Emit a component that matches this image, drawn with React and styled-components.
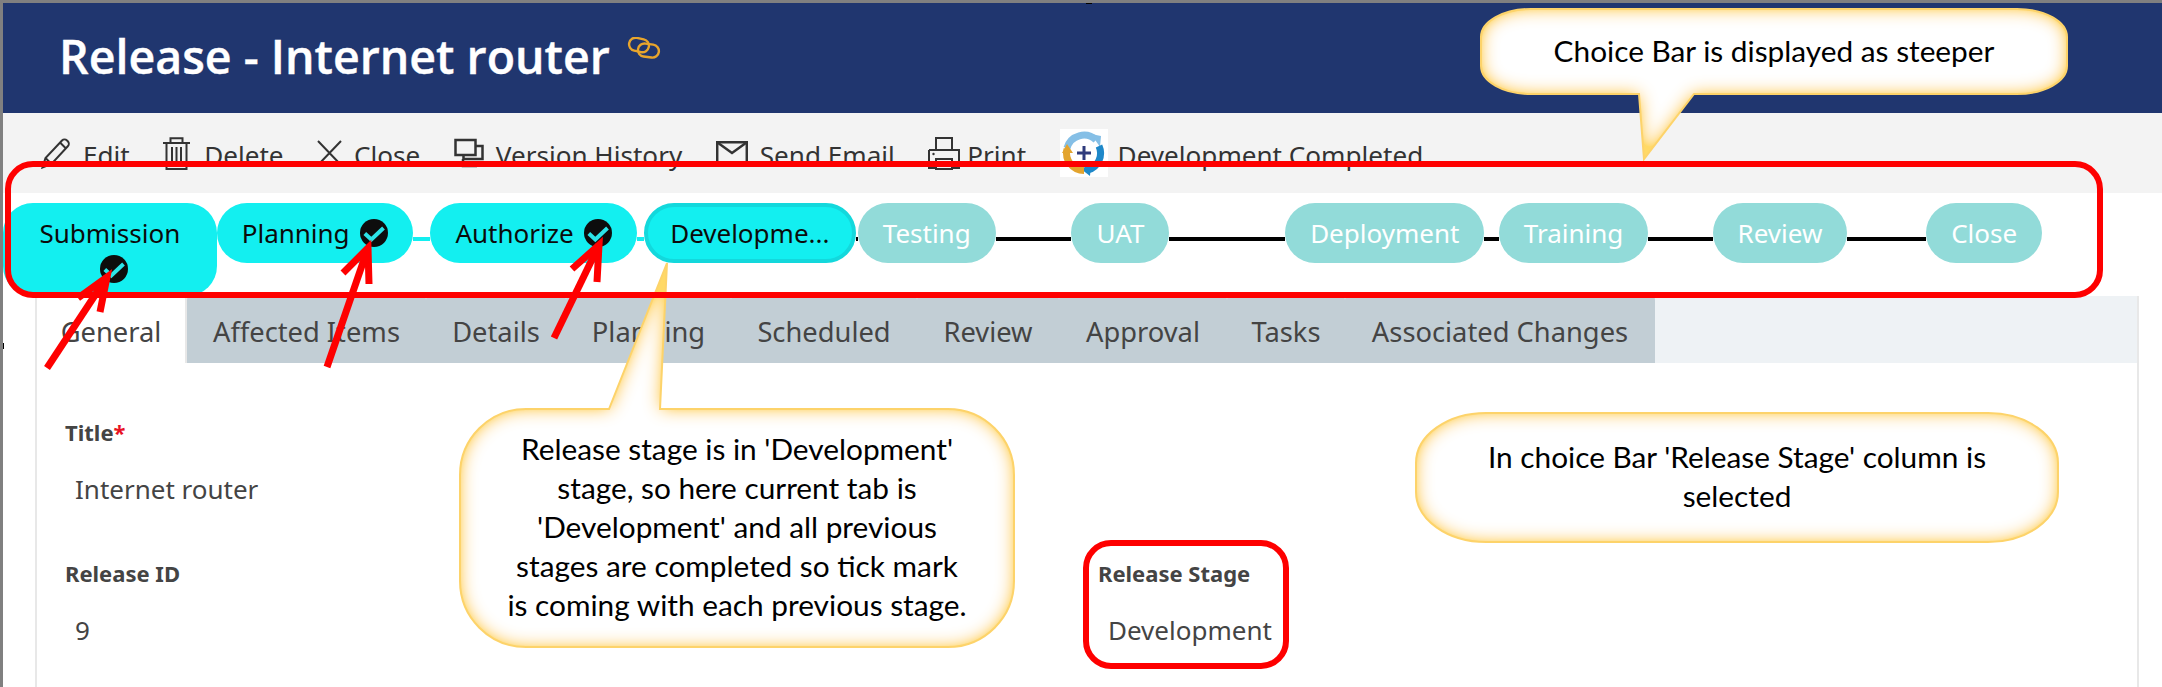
import React from "react";
import styled, { createGlobalStyle } from "styled-components";

const Global = createGlobalStyle`
  html, body { margin: 0; padding: 0; background: #fff; }
  #root { width: 2162px; height: 687px; overflow: hidden; }
`;

const UI = `"Noto Sans", "Open Sans", sans-serif`;

const Page = styled.div`
  position: relative;
  box-sizing: border-box;
  width: 2162px;
  height: 687px;
  overflow: hidden;
  border-top: 3px solid #808080;
  border-left: 3px solid #808080;
  background: #fff;
  font-family: ${UI};
`;

const Handle = styled.span`
  position: absolute;
  z-index: 5;
  box-sizing: border-box;
  width: ${(p) => p.$w}px;
  height: ${(p) => p.$h}px;
  left: ${(p) => p.$x}px;
  top: ${(p) => p.$y}px;
  background: #fff;
  border: 1px solid #000;
`;

const Header = styled.header`
  display: flex;
  align-items: flex-start;
  height: 110px;
  padding-left: 56px;
  background: #20366f;
`;

const Title = styled.h1`
  margin: 22px 0 0;
  color: #fff;
  font-family: "Open Sans", sans-serif;
  font-size: 46.5px;
  line-height: 62px;
  font-weight: 600;
  -webkit-text-stroke: 0.4px #fff;
`;

const LinkMark = styled.svg`
  width: 34px;
  height: 22px;
  margin: 34px 0 0 17px;
`;

const Toolbar = styled.nav`
  display: flex;
  align-items: center;
  gap: 33.5px;
  height: 80px;
  padding-left: 38px;
  background: #f3f3f3;
`;

const Action = styled.div`
  display: flex;
  align-items: center;
  gap: ${(p) => p.$gap || 12}px;
  color: #333;
  font-size: 26.1px;
  line-height: 34px;
`;

const ActionLabel = styled.span`
  position: relative;
  top: 2px;
`;

const Stepper = styled.div`
  display: grid;
  grid-template-columns: repeat(10, 213.7px);
  height: 103px;
  padding-top: 10px;
  box-sizing: border-box;
  background: #fff;
`;

const Step = styled.div`
  display: flex;
  align-items: flex-start;
  min-width: 0;
`;

const Pill = styled.div`
  box-sizing: border-box;
  display: flex;
  flex-direction: ${(p) => (p.$stacked ? "column" : "row")};
  flex: ${(p) => (p.$fill ? "1 1 auto" : "0 0 auto")};
  align-items: center;
  justify-content: ${(p) => (p.$stacked ? "flex-start" : "center")};
  gap: ${(p) => (p.$stacked ? "5px" : "10px")};
  height: ${(p) => (p.$stacked ? "93px" : "60px")};
  padding: ${(p) => (p.$stacked ? "13px 0 0" : p.$current ? "0 21px" : "0 25px")};
  border-radius: 30px;
  border: ${(p) => (p.$current ? "4px solid #13d8dc" : "0")};
  background: ${(p) => (p.$pending ? "#92dbd9" : "#13eff0")};
  color: ${(p) => (p.$pending ? "#fff" : "#0b0b0b")};
  font-size: 26px;
  line-height: 34px;
  white-space: nowrap;
`;

const Connector = styled.i`
  flex: 1 1 0;
  min-width: 0;
  height: 4px;
  margin-top: 34px;
  background: ${(p) => (p.$done ? "#13eff0" : "#000")};
`;

const Tick = styled.svg`
  flex: none;
  width: 28px;
  height: 28px;
  margin-left: ${(p) => (p.$shift ? "8px" : "0")};
`;

const Card = styled.section`
  box-sizing: border-box;
  width: 2104px;
  height: 400px;
  margin-left: 32px;
  border-left: 2px solid #e8e8e8;
  border-right: 2px solid #e8e8e8;
`;

const TabBar = styled.div`
  display: flex;
  height: 67px;
  background: #eef2f5;
`;

const Tab = styled.div`
  box-sizing: border-box;
  flex: none;
  display: flex;
  align-items: center;
  justify-content: center;
  width: ${(p) => p.$w}px;
  padding-top: 4px;
  border-radius: 4px 4px 0 0;
  background: ${(p) => (p.$active ? "#fff" : "#c2ced5")};
  border-right: ${(p) => (p.$active ? "2px solid #e8e8e8" : "0")};
  color: #444;
  font-size: 27.3px;
  line-height: 34px;
`;

const Form = styled.div`
  display: grid;
  grid-template-columns: 1033px 1fr;
  grid-template-rows: 141px 121px;
  padding: 54px 0 0 28px;
`;

const Field = styled.div`
  position: relative;
  grid-column: ${(p) => p.$col || 1};
  grid-row: ${(p) => p.$row};
  width: fit-content;
  height: fit-content;
`;

const FieldLabel = styled.div`
  color: #444;
  font-size: 22px;
  line-height: 30px;
  font-weight: 700;
  height: 30px;
`;

const Required = styled.span`
  color: #e81123;
`;

const FieldValue = styled.div`
  margin-top: 25px;
  padding-left: 10px;
  color: #444;
  font-size: 26px;
  line-height: 34px;
`;

const StageFrame = styled.div`
  position: absolute;
  box-sizing: border-box;
  z-index: 2;
  left: -15px;
  top: -18px;
  width: 206px;
  height: 129px;
  border: 6px solid #fe0000;
  border-radius: 28px;
`;

const StepperFrame = styled.div`
  position: absolute;
  box-sizing: border-box;
  z-index: 2;
  left: 2px;
  top: 158px;
  width: 2098px;
  height: 137px;
  border: 6px solid #fe0000;
  border-radius: 28px;
`;

const CalloutBox = styled.div`
  position: absolute;
  z-index: 1;
  left: ${(p) => p.$x - 3}px;
  top: ${(p) => p.$y - 3}px;
  width: ${(p) => p.$w}px;
  height: ${(p) => p.$h}px;
  display: flex;
  align-items: center;
  justify-content: center;
`;

const CalloutShape = styled.svg`
  position: absolute;
  inset: 0;
  width: 100%;
  height: 100%;
  overflow: visible;
`;

const CalloutText = styled.div`
  position: relative;
  width: ${(p) => p.$tw}px;
  padding-bottom: 3px;
  color: #000;
  font-family: Lato, "Open Sans", sans-serif;
  font-size: 29.8px;
  line-height: 39px;
  text-align: center;
`;

const ArrowLayer = styled.svg`
  position: absolute;
  z-index: 3;
  left: -3px;
  top: -3px;
  width: 2162px;
  height: 687px;
  pointer-events: none;
`;

/* ---------- drawings ---------- */

const stroke = { fill: "none", stroke: "#333", strokeWidth: 2 };

const Icon = ({ w, h, children }) => (
  <svg width={w} height={h} viewBox={`0 0 ${w} ${h}`} style={{ flex: "none" }}>
    {children}
  </svg>
);

const PencilIcon = () => (
  <Icon w={30} h={32}>
    <path {...stroke} d="M1.5 30.5l3-9.5L21 3.5a3.6 3.6 0 0 1 5 0l.8.8a3.6 3.6 0 0 1 0 5L10.5 27z" />
    <path {...stroke} d="M4.5 21l6 6M19 5.5l6 6" />
  </Icon>
);

const TrashIcon = () => (
  <Icon w={27} h={33}>
    <path {...stroke} d="M0 6h27M7.5 6V1.2h12V6M3.5 6v26h20V6M9 10v19M13.5 10v19M18 10v19" />
  </Icon>
);

const CloseIcon = () => (
  <Icon w={25} h={26}>
    <path {...stroke} d="M1 1l23 24M24 1L1 25" />
  </Icon>
);

const VersionIcon = () => (
  <Icon w={30} h={30}>
    <path fill="none" stroke="#333" strokeWidth="2.5" d="M1.5 2h20v15h-20z" />
    <path fill="none" stroke="#333" strokeWidth="2.5" d="M22 8h6.5v13H9.5v-4M9 21v7h14" />
  </Icon>
);

const MailIcon = () => (
  <Icon w={32} h={24}>
    <path {...stroke} strokeWidth="2.5" d="M1.2 1.2h29.6v21.6H1.2z" />
    <path {...stroke} strokeWidth="2.5" d="M1.5 1.5L16 12 30.5 1.5" />
  </Icon>
);

const PrintIcon = () => (
  <Icon w={32} h={33}>
    <path {...stroke} d="M8 12V1h16v11M1 13h30v18h-6M7 31H1V13M8 22h16v10H8z" />
    <circle cx="5.5" cy="17" r="1.2" fill="#333" />
  </Icon>
);

const LogoTile = styled.svg`
  flex: none;
  width: 48px;
  height: 48px;
  background: #fff;
`;

const FlowLogo = () => (
  <LogoTile viewBox="0 0 48 48">
    <path fill="none" stroke="#85bfe6" strokeWidth="7" d="M7 19A17.5 17.5 0 0 1 36 11" />
    <path fill="#85bfe6" d="M31 5l10 2-1 11z" />
    <path fill="none" stroke="#1e88c9" strokeWidth="7" d="M39 17A17.5 17.5 0 0 1 28 41" />
    <path fill="#1e88c9" d="M31 35l-1 12-9-7z" />
    <path fill="none" stroke="#e3a42e" strokeWidth="7" d="M24 41.5A17.5 17.5 0 0 1 7 20" />
    <path fill="#e3a42e" d="M2 24l5-9 6 9z" />
    <path fill="none" stroke="#2f3b7c" strokeWidth="3" d="M17 24h14M24 17v14" />
  </LogoTile>
);

const TickMark = ({ shift }) => (
  <Tick viewBox="0 0 28 28" $shift={shift}>
    <circle cx="14" cy="14" r="14" fill="#0d0d0d" />
    <path fill="none" stroke="#2ce4e8" strokeWidth="4" d="M4.8 14.5l6.5 6L23.5 9" />
  </Tick>
);

const roundedPath = (w, h, rx, ry, tail) => {
  const top = tail && tail.side === "top" ? `L${tail.a} 0L${tail.tx} ${tail.ty}L${tail.b} 0` : "";
  const bottom = tail && tail.side === "bottom" ? `L${tail.a} ${h}L${tail.tx} ${tail.ty}L${tail.b} ${h}` : "";
  const corner = (x, y) => `A${rx} ${ry} 0 0 1 ${x} ${y}`;
  return (
    `M${rx} 0${top}L${w - rx} 0${corner(w, ry)}L${w} ${h - ry}${corner(w - rx, h)}` +
    `${bottom}L${rx} ${h}${corner(0, h - ry)}L0 ${ry}${corner(rx, 0)}Z`
  );
};

const Callout = ({ id, x, y, w, h, rx, ry, tail, textWidth, children }) => (
  <CalloutBox $x={x} $y={y} $w={w} $h={h}>
    <CalloutShape viewBox={`0 0 ${w} ${h}`}>
      <defs>
        <filter id={id} filterUnits="userSpaceOnUse" x="-40" y="-200" width={w + 80} height={h + 300}>
          <feGaussianBlur in="SourceAlpha" stdDeviation="9" result="blur" />
          <feComposite in="SourceAlpha" in2="blur" operator="out" result="edge" />
          <feComponentTransfer in="edge" result="strong">
            <feFuncA type="linear" slope="1.7" />
          </feComponentTransfer>
          <feFlood floodColor="#ffd966" />
          <feComposite in2="strong" operator="in" result="glow" />
          <feMerge>
            <feMergeNode in="SourceGraphic" />
            <feMergeNode in="glow" />
          </feMerge>
        </filter>
      </defs>
      <path d={roundedPath(w, h, rx, ry, tail)} fill="#fff" filter={`url(#${id})`} />
      <path d={roundedPath(w, h, rx, ry, tail)} fill="none" stroke="#fdd36a" strokeWidth="2" />
    </CalloutShape>
    <CalloutText $tw={textWidth}>{children}</CalloutText>
  </CalloutBox>
);

const Arrow = ({ from, tip, left, right }) => (
  <g fill="none" stroke="#fe0000" strokeWidth="7">
    <path d={`M${from}L${tip}`} />
    <path d={`M${left}L${tip}L${right}`} />
  </g>
);

/* ---------- data ---------- */

const steps = [
  { name: "Submission", state: "done", stacked: true },
  { name: "Planning", state: "done" },
  { name: "Authorize", state: "done" },
  { name: "Developme...", state: "current" },
  { name: "Testing" },
  { name: "UAT" },
  { name: "Deployment" },
  { name: "Training" },
  { name: "Review" },
  { name: "Close" },
];

const tabs = [
  ["General", 150, true],
  ["Affected Items", 239],
  ["Details", 140],
  ["Planning", 165],
  ["Scheduled", 186],
  ["Review", 142],
  ["Approval", 168],
  ["Tasks", 118],
  ["Associated Changes", 310],
];

export default function App() {
  return (
    <Page>
      <Global />
      <Handle $x={-3} $y={-3} $w={3} $h={4} />
      <Handle $x={1083} $y={-3} $w={6} $h={4} />
      <Handle $x={-3} $y={340} $w={4} $h={6} />

      <Header>
        <Title>Release - Internet router</Title>
        <LinkMark viewBox="0 0 34 22">
          <g fill="none" stroke="#e8a52c" strokeWidth="2.4">
            <rect x="2" y="1.5" width="20" height="13" rx="6.5" transform="rotate(12 12 8)" />
            <rect x="11" y="7" width="21" height="13" rx="6.5" transform="rotate(8 21 13)" />
          </g>
        </LinkMark>
      </Header>

      <Toolbar>
        <Action><PencilIcon /><ActionLabel>Edit</ActionLabel></Action>
        <Action $gap={14}><TrashIcon /><ActionLabel>Delete</ActionLabel></Action>
        <Action><CloseIcon /><ActionLabel>Close</ActionLabel></Action>
        <Action><VersionIcon /><ActionLabel>Version History</ActionLabel></Action>
        <Action><MailIcon /><ActionLabel>Send Email</ActionLabel></Action>
        <Action $gap={7}><PrintIcon /><ActionLabel>Print</ActionLabel></Action>
        <Action $gap={10}><FlowLogo /><ActionLabel>Development Completed</ActionLabel></Action>
      </Toolbar>

      <Stepper>
        {steps.map((s, i) => (
          <Step key={s.name}>
            <Pill
              $stacked={s.stacked}
              $fill={s.stacked || s.state === "current"}
              $current={s.state === "current"}
              $pending={!s.state}
            >
              {s.name}
              {s.state === "done" && <TickMark shift={s.stacked} />}
            </Pill>
            {i < steps.length - 1 && !s.stacked && (
              <Connector $done={s.state === "done"} />
            )}
          </Step>
        ))}
      </Stepper>

      <Card>
        <TabBar>
          {tabs.map(([name, w, active]) => (
            <Tab key={name} $w={w} $active={active}>{name}</Tab>
          ))}
        </TabBar>
        <Form>
          <Field $row={1}>
            <FieldLabel>Title<Required>*</Required></FieldLabel>
            <FieldValue>Internet router</FieldValue>
          </Field>
          <Field $row={2}>
            <FieldLabel>Release ID</FieldLabel>
            <FieldValue>9</FieldValue>
          </Field>
          <Field $row={2} $col={2}>
            <StageFrame />
            <FieldLabel>Release Stage</FieldLabel>
            <FieldValue>Development</FieldValue>
          </Field>
        </Form>
      </Card>

      <StepperFrame />

      <Callout
        id="glowTop" x={1481} y={9} w={586} h={85} rx={50} ry={28}
        tail={{ side: "bottom", a: 213, tx: 163, ty: 150, b: 158 }}
        textWidth={560}
      >
        Choice Bar is displayed as steeper
      </Callout>
      <Callout
        id="glowMid" x={460} y={409} w={554} h={238} rx={66} ry={66}
        tail={{ side: "top", a: 149, tx: 207, ty: -146, b: 200 }}
        textWidth={467}
      >
        Release stage is in 'Development' stage, so here current tab is 'Development' and all previous stages are completed so tick mark is coming with each previous stage.
      </Callout>
      <Callout
        id="glowRight" x={1416} y={413} w={642} h={129} rx={70} ry={50}
        textWidth={530}
      >
        In choice Bar 'Release Stage' column is selected
      </Callout>

      <ArrowLayer viewBox="0 0 2162 687">
        <Arrow from="47,368" tip="107,277" left="78,298" right="100,312" />
        <Arrow from="327,367" tip="368,248" left="343,273" right="369,284" />
        <Arrow from="554,338" tip="599,245" left="572,269" right="597,282" />
      </ArrowLayer>
    </Page>
  );
}
